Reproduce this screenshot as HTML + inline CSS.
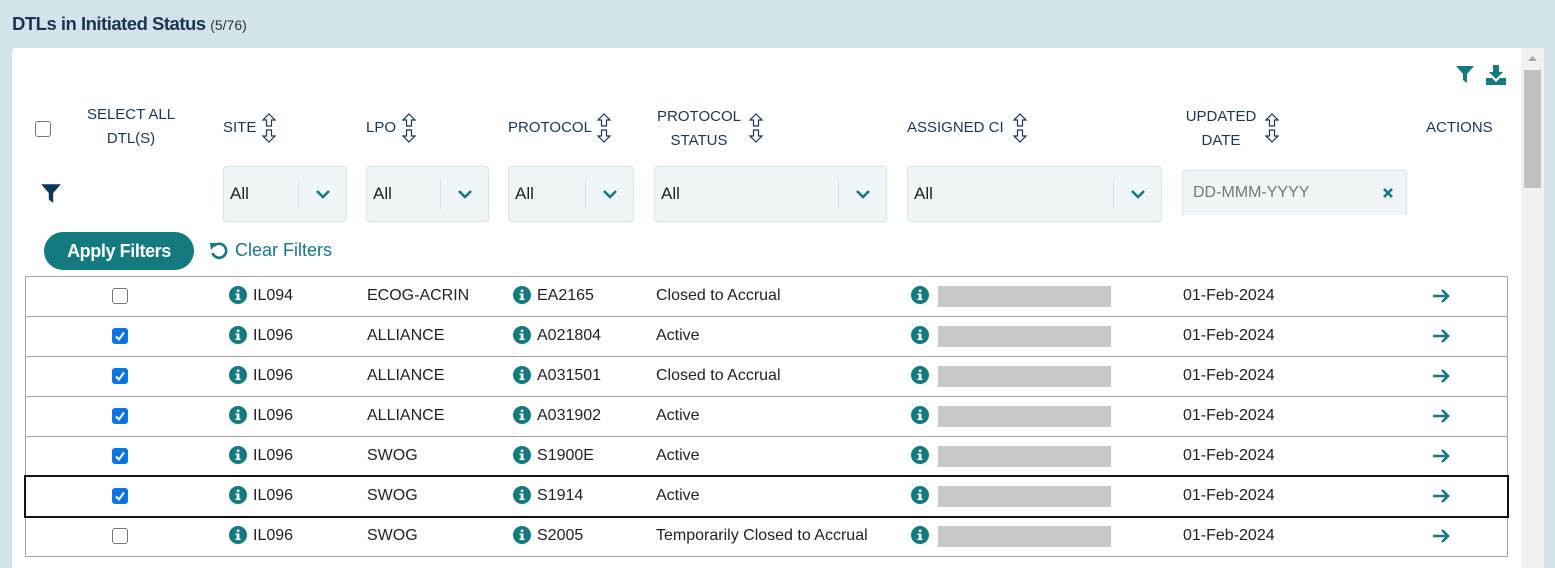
<!DOCTYPE html>
<html><head><meta charset="utf-8"><style>
*{margin:0;padding:0;box-sizing:border-box}
body{width:1555px;height:559px;overflow:hidden;background:#d3e3ea;font-family:"Liberation Sans",sans-serif;position:relative;color:#222}
.a{position:absolute}
.title{left:12px;top:13px;font-size:18.5px;font-weight:bold;color:#1c3553;letter-spacing:-0.5px}
.title span{font-weight:normal;font-size:14px;color:#333;letter-spacing:0}
.panel{left:12px;top:48px;width:1532px;height:520px;background:#fff;border-radius:4px 0 0 0}
.sb{left:1521px;top:48px;width:23px;height:520px;background:#f1f1f1}
.thumb{left:1524px;top:70px;width:17px;height:118px;background:#c1c1c1}
.h{font-size:15px;color:#1c3553;text-align:center;line-height:24px}
.sel{background:#f0f6f8;border:1px solid #d3e5eb;border-radius:4px;height:56px;font-size:17px;color:#222}
.sel .t{position:absolute;left:6px;top:17px}
.sel .d{position:absolute;right:47px;top:12px;width:1px;height:30px;background:#d3e5eb}
.sel svg{position:absolute;right:15px;top:22px}
.cb{width:16px;height:16px;border:1px solid #767676;border-radius:3px;background:#fff}
.cb.on{background:#0b75e6;border-color:#0b75e6}
.row{left:25px;width:1483px;height:41px;border:1px solid #a5a5a5;font-size:16px;color:#222}
.row .c{position:absolute;top:10px}
.gray{position:absolute;left:912px;top:9px;width:173px;height:21px;background:#c8c8c8}
</style></head><body>
<div class="a title">DTLs in Initiated Status <span>(5/76)</span></div>
<div class="a panel"></div>
<div class="a sb"></div><div class="a thumb"></div>
<svg class="a" style="left:1527px;top:55px" width="11" height="7"><path d="M1 6L5.5 1L10 6Z" fill="#a3a3a3"/></svg>
<svg class="a" style="left:1455px;top:64px" width="20" height="20" viewBox="0 0 20 20"><path d="M1 2H19L12 10V19L8 16V10Z" fill="#137a80"/></svg>
<svg class="a" style="left:1485px;top:64px" width="22" height="22" viewBox="0 0 22 22"><path d="M8 1H14V8H18L11 15L4 8H8Z" fill="#137a80"/><path d="M1 14H7L11 18L15 14H21V21H1Z" fill="#137a80"/></svg>
<div class="a cb" style="left:35px;top:121px"></div>
<div class="a h" style="left:71px;top:103px;width:120px">SELECT ALL<br>DTL(S)</div>
<div id="hd"></div>
<div class="a h" style="left:1426px;top:116px">ACTIONS</div>
<svg class="a" style="left:40px;top:182px" width="22" height="22" viewBox="0 0 20 20"><path d="M1 2H19L12 10V19L8 16V10Z" fill="#0f3558"/></svg>
<div id="sels"></div>
<div class="a" style="left:1182px;top:170px;width:225px;height:45px;background:#f0f6f8;border:1px solid #d3e5eb;border-bottom:none;border-radius:4px 4px 0 0;font-size:16px;color:#777"><span style="position:absolute;left:10px;top:13px">DD-MMM-YYYY</span><svg style="position:absolute;right:12px;top:16px" width="12" height="12"><path d="M2 2L10 10M10 2L2 10" stroke="#137a80" stroke-width="2.6"/></svg></div>
<div class="a" style="left:44px;top:232px;width:150px;height:38px;border-radius:19px;background:#137a80;color:#fff;font-size:18px;font-weight:bold;text-align:center;line-height:38px;letter-spacing:-0.4px">Apply Filters</div>
<svg class="a" style="left:209px;top:241px" width="20" height="20" viewBox="0 0 20 20"><path d="M5 5A7 7 0 1 1 3.5 12" fill="none" stroke="#137a80" stroke-width="2.6"/><path d="M1 2L8 2L2 9Z" fill="#137a80"/></svg>
<div class="a" style="left:235px;top:240px;font-size:18px;color:#137a80">Clear Filters</div>
<div id="rows"></div>
<script>
var sortSvg='<svg width="14" height="30" viewBox="0 0 14 30"><path d="M7 1L13 7H9.5V13H4.5V7H1Z M7 29L13 23H9.5V17H4.5V23H1Z" fill="none" stroke="#1c3553" stroke-width="1.2"/></svg>';
var hd=[[223,128,'SITE',262],[366,128,'LPO',402],[508,128,'PROTOCOL',597],[907,128,'ASSIGNED CI',1013]];
var h='';
hd.forEach(function(x){h+='<div class="a h" style="left:'+x[0]+'px;top:'+(x[1]-12)+'px">'+x[2]+'</div><div class="a" style="left:'+x[3]+'px;top:113px">'+sortSvg+'</div>';});
h+='<div class="a h" style="left:654px;top:105px;width:90px">PROTOCOL<br>STATUS</div><div class="a" style="left:749px;top:113px">'+sortSvg+'</div>';
h+='<div class="a h" style="left:1178px;top:105px;width:86px">UPDATED<br>DATE</div><div class="a" style="left:1265px;top:113px">'+sortSvg+'</div>';
document.getElementById('hd').innerHTML=h;
var s='',sl=[[223,124],[366,123],[508,126],[654,233],[907,255]];
sl.forEach(function(x){s+='<div class="a sel" style="left:'+x[0]+'px;top:166px;width:'+x[1]+'px"><span class="t">All</span><span class="d"></span><svg width="16" height="10"><path d="M2 2L8 8L14 2" fill="none" stroke="#137a80" stroke-width="2.6"/></svg></div>';});
document.getElementById('sels').innerHTML=s;
var info='<svg width="18" height="18" viewBox="0 0 18 18" style="position:absolute;top:-1px"><circle cx="9" cy="9" r="9" fill="#137a80"/><rect x="7.8" y="7.5" width="2.6" height="6.5" fill="#fff"/><rect x="6.5" y="7.5" width="2" height="1.6" fill="#fff"/><rect x="6.5" y="12.5" width="5" height="1.6" fill="#fff"/><circle cx="9.1" cy="4.8" r="1.4" fill="#fff"/></svg>';
var rows=[[0,'IL094','ECOG-ACRIN','EA2165','Closed to Accrual'],[1,'IL096','ALLIANCE','A021804','Active'],[1,'IL096','ALLIANCE','A031501','Closed to Accrual'],[1,'IL096','ALLIANCE','A031902','Active'],[1,'IL096','SWOG','S1900E','Active'],[1,'IL096','SWOG','S1914','Active'],[0,'IL096','SWOG','S2005','Temporarily Closed to Accrual']];
var r='';
rows.forEach(function(x,i){var t=276+i*40;var bs=i==5?'border-color:#111;box-shadow:0 0 0 1px #111;z-index:2;':'';
r+='<div class="a row" style="top:'+t+'px;'+bs+'"><div class="cb'+(x[0]?' on':'')+'" style="position:absolute;left:86px;top:11px">'+(x[0]?'<svg width="14" height="14" style="position:absolute;left:0;top:0"><path d="M3 7.5L6 10.5L11 3.5" fill="none" stroke="#fff" stroke-width="2"/></svg>':'')+'</div>'+
'<div class="c" style="left:203px">'+info+'<span style="margin-left:24px">'+x[1]+'</span></div>'+
'<div class="c" style="left:341px">'+x[2]+'</div>'+
'<div class="c" style="left:487px">'+info+'<span style="margin-left:24px">'+x[3]+'</span></div>'+
'<div class="c" style="left:630px">'+x[4]+'</div>'+
'<div class="c" style="left:885px">'+info+'</div><div class="gray"></div>'+
'<div class="c" style="left:1157px">01-Feb-2024</div>'+
'<svg style="position:absolute;left:1406px;top:11px" width="18" height="16"><path d="M1 8H16M10 2L16 8L10 14" fill="none" stroke="#137a80" stroke-width="2.6"/></svg></div>';});
document.getElementById('rows').innerHTML=r;
</script>
</body></html>
